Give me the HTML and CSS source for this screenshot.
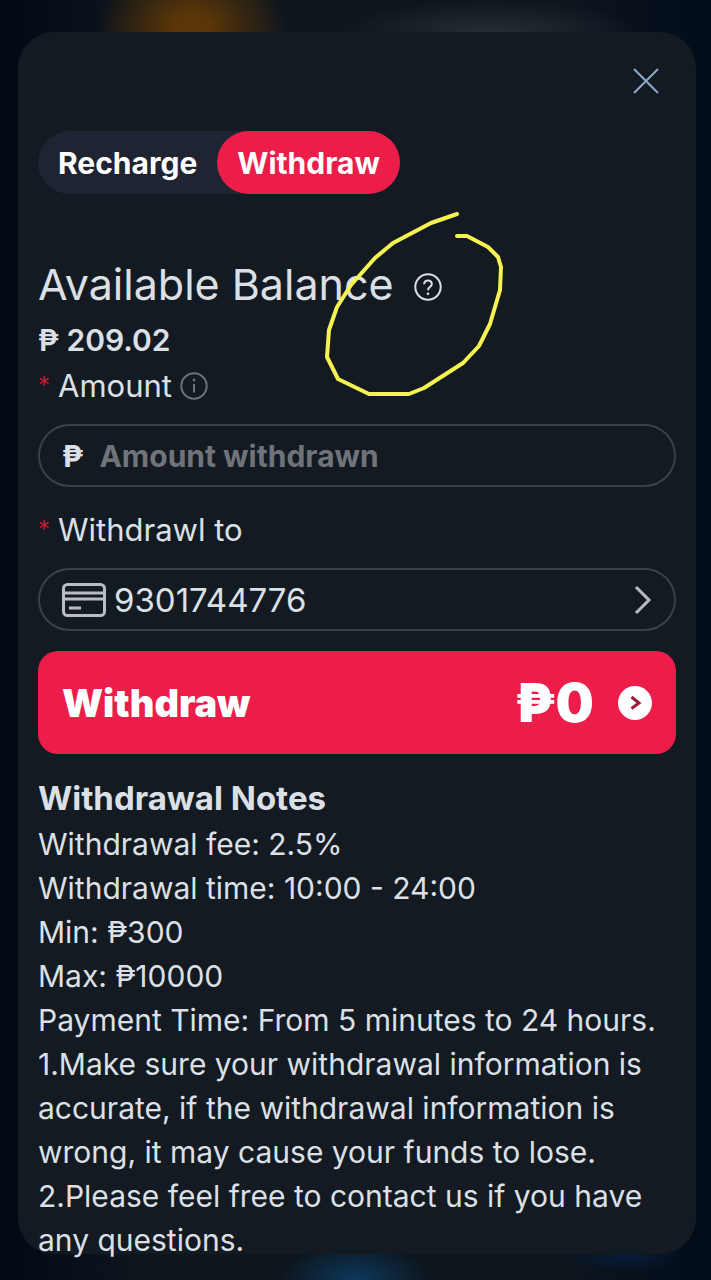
FILE: index.html
```html
<!DOCTYPE html>
<html lang="en">
<head>
    <meta charset="UTF-8">
    <meta name="viewport" content="width=device-width, initial-scale=1.0">
    <title>Withdraw</title>
    <link rel="stylesheet" href="styles.css">
</head>
<body>
    <main class="modal">
        <header class="modal-header">
            <button type="button" class="close-btn" aria-label="Close">
                <svg width="28" height="28" viewBox="0 0 28 28"><path d="M2 2L26 26M26 2L2 26"/></svg>
            </button>
        </header>

        <nav class="tabs">
            <button type="button" class="tab">Recharge</button>
            <button type="button" class="tab active">Withdraw</button>
        </nav>

        <section class="balance">
            <h1>Available Balance
                <svg class="help-icon" width="28" height="28" viewBox="0 0 28 28">
                    <circle cx="14" cy="14" r="12.7"/>
                    <path d="M10.2 11.2C10.2 6.3 17.8 6.3 17.8 11C17.8 14 14 13.8 14 17.2"/>
                    <circle class="dot" cx="14" cy="20.8" r="1.3"/>
                </svg>
            </h1>
            <p class="balance-value">₱ 209.02</p>
        </section>

        <form class="withdraw-form">
            <label class="field-label" for="amount">
                <span class="required">*</span>Amount
                <svg class="info-icon" width="28" height="28" viewBox="0 0 28 28">
                    <circle cx="14" cy="14" r="12.7"/>
                    <path d="M14 12V20.5"/>
                    <circle class="dot" cx="14" cy="8" r="1.4"/>
                </svg>
            </label>
            <div class="field">
                <span class="currency">₱</span>
                <input type="text" id="amount" placeholder="Amount withdrawn">
            </div>

            <label class="field-label second" for="account"><span class="required">*</span>Withdrawl to</label>
            <button type="button" class="field account" id="account">
                <svg class="card-icon" width="44" height="34" viewBox="0 0 44 34">
                    <rect x="1.5" y="1.5" width="41" height="31" rx="4"/>
                    <path d="M2 10H42M2 16H42M7 25H19"/>
                </svg>
                <span class="account-number">9301744776</span>
                <svg class="arrow-icon" width="18" height="30" viewBox="0 0 18 30"><path d="M2 2L15 15L2 28"/></svg>
            </button>

            <button type="submit" class="submit-btn">
                <span>Withdraw</span>
                <span class="total">₱0</span>
                <svg width="34" height="34" viewBox="0 0 34 34">
                    <circle cx="17" cy="17" r="17"/>
                    <path d="M13.5 11L21 17L13.5 22.5"/>
                </svg>
            </button>
        </form>

        <section class="notes">
            <h2>Withdrawal Notes</h2>
            <p>Withdrawal fee: 2.5%</p>
            <p>Withdrawal time: 10:00 - 24:00</p>
            <p>Min: ₱300</p>
            <p>Max: ₱10000</p>
            <p>Payment Time: From 5 minutes to 24 hours.</p>
            <p>1.Make sure your withdrawal information is accurate, if the withdrawal information is wrong, it may cause your funds to lose.</p>
            <p>2.Please feel free to contact us if you have any questions.</p>
        </section>

        <!-- Hand-drawn marker over the balance -->
        <svg class="marker" width="180" height="190" viewBox="325 210 180 190">
            <path d="M457 214L431 223L393 243L375 258L351 285L337 307L329 330L327 357L338 379L369 394H409L424 388L463 363L479 346L490 324L500 290L501 267L498 257L488 247L467 236H457"/>
        </svg>
    </main>
</body>
</html>
```
FILE: styles.css
```css
* {
    box-sizing: border-box;
}

body {
    margin: 0;
    min-height: 100vh;
    padding: 32px 15px 26px 18px;
    overflow: hidden;
    font-family: Inter, "Open Sans", sans-serif;
    color: #dce0e6;
    background:
        radial-gradient(ellipse 95px 75px at 27% 28px, #5a3508 20%, transparent),
        radial-gradient(ellipse 150px 32px at 69% 32px, #262d35, transparent),
        radial-gradient(ellipse 75px 40px at 50% 100%, #0d395c, transparent),
        radial-gradient(ellipse 60px 16px at 88% calc(100% - 24px), #071c3a, transparent),
        linear-gradient(90deg, #020915, #0d151d 20%, #0d151d 80%, #020b1b);
}

h1, h2, p {
    margin: 0;
}

button, input {
    font-family: inherit;
    color: inherit;
}

button {
    border: none;
    cursor: pointer;
}

svg {
    flex-shrink: 0;
    fill: none;
    stroke: currentColor;
    stroke-width: 2;
}

.dot {
    fill: currentColor;
    stroke: none;
}

.modal {
    position: relative;
    height: calc(100vh - 58px);
    padding: 25px 20px 0;
    background-color: #131a22;
    border-radius: 36px;
}

.modal-header {
    display: flex;
    justify-content: flex-end;
    margin-bottom: 26px;
}

.close-btn {
    display: flex;
    align-items: center;
    justify-content: center;
    width: 60px;
    height: 48px;
    padding: 0;
    background: none;
    color: #8fabc9;
}

.tabs {
    display: inline-flex;
    height: 63px;
    background-color: #1e2431;
    border-radius: 32px;
}

.tab {
    padding: 0 20px;
    background: none;
    border-radius: 32px;
    color: #fff;
    font-size: 30px;
    font-weight: 700;
}

.tab.active {
    background-color: #ec1d49;
}

.balance {
    margin-top: 66px;
}

.balance h1 {
    display: flex;
    align-items: center;
    gap: 20px;
    font-size: 43px;
    font-weight: 400;
    line-height: 48px;
}

.help-icon {
    margin-top: 6px;
}

.balance-value {
    margin-top: 14px;
    font-size: 30px;
    font-weight: 600;
    line-height: 36px;
}

.field-label {
    display: flex;
    align-items: center;
    gap: 8px;
    margin: 10px 0 20px;
    font-size: 31px;
    line-height: 36px;
}

.field-label.second {
    margin-top: 25px;
}

.required {
    width: 12px;
    color: #b9202f;
    font-size: 24px;
}

.info-icon {
    color: #6d7175;
}

.field {
    display: flex;
    align-items: center;
    width: 100%;
    height: 63px;
    padding: 0 22px;
    background: none;
    border: 2px solid #3b4147;
    border-radius: 32px;
}

.currency {
    margin-right: 16px;
    font-size: 30px;
    font-weight: 700;
}

.field input {
    flex: 1;
    min-width: 0;
    padding: 0;
    background: none;
    border: none;
    outline: none;
    font-size: 30px;
    font-weight: 700;
}

.field input::placeholder {
    color: #70747a;
    opacity: 1;
}

.account {
    font-size: 33px;
}

.card-icon {
    margin-right: 8px;
    color: #b9bdc2;
    stroke-width: 3;
}

.arrow-icon {
    margin-left: auto;
    color: #b9bdc2;
    stroke-width: 3;
}

.submit-btn {
    display: flex;
    align-items: center;
    width: 100%;
    height: 103px;
    margin-top: 20px;
    padding: 0 24px;
    background-color: #ec1d49;
    border-radius: 20px;
    color: #fff;
    font-size: 38px;
    font-weight: 900;
}

.total {
    margin: 0 24px 0 auto;
    font-size: 54px;
}

.submit-btn circle {
    fill: #fff;
    stroke: none;
}

.submit-btn path {
    stroke: #9c1c3c;
    stroke-width: 3;
}

.notes {
    margin-top: 22px;
    font-size: 30px;
    line-height: 44px;
}

.notes h2 {
    margin-bottom: 2px;
    font-size: 33px;
    font-weight: 700;
}

.marker {
    position: absolute;
    top: 178px;
    left: 307px;
    color: #f5f251;
    stroke-width: 4;
    stroke-linecap: round;
    stroke-linejoin: round;
    pointer-events: none;
}
```
